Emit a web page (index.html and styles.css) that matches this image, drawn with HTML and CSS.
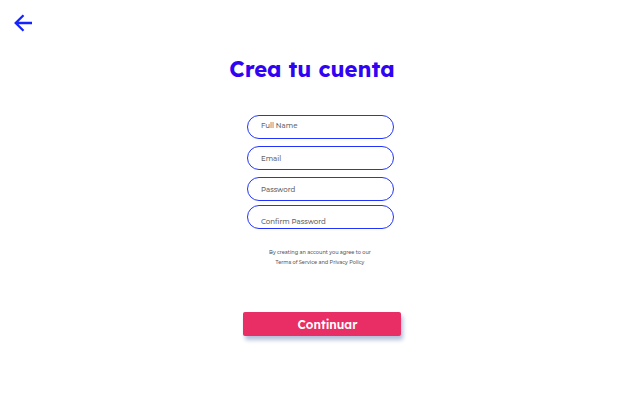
FILE: index.html
```html
<!DOCTYPE html>
<html lang="es">
<head>
<meta charset="utf-8">
<meta name="viewport" content="width=device-width, initial-scale=1">
<title>Crea tu cuenta</title>
<link rel="stylesheet" href="styles.css">
</head>
<body>
<header class="topbar">
  <a class="back" href="#" aria-label="Volver">
    <svg width="20" height="20" viewBox="0 0 20 20" fill="none" stroke="#1524fb" stroke-width="2.3" aria-hidden="true">
      <path d="M19 10H3M10.5 2.2 2.7 10l7.8 7.8"/>
    </svg>
  </a>
</header>
<main class="signup">
  <h1 class="title">Crea tu cuenta</h1>
  <form class="form">
    <div class="fields">
      <input class="field field-name" type="text" placeholder="Full Name" aria-label="Full Name">
      <input class="field" type="email" placeholder="Email" aria-label="Email">
      <input class="field" type="password" placeholder="Password" aria-label="Password">
      <input class="field field-confirm" type="password" placeholder="Confirm Password" aria-label="Confirm Password">
    </div>
    <p class="terms">By creating an account you agree to our<br>Terms of Service and Privacy Policy</p>
    <button class="submit" type="submit">Continuar</button>
  </form>
</main>
</body>
</html>
```
FILE: styles.css
```css
* {
  box-sizing: border-box;
}

body {
  min-height: 100vh;
  margin: 0;
  background: #fff;
  font-family: Montserrat, Inter, "Open Sans", sans-serif;
}

.topbar {
  display: flex;
  padding: 13px 13px 0;
}

.back {
  display: flex;
}

.signup {
  display: flex;
  flex-direction: column;
  align-items: center;
  padding: 20px 0 32px;
}

.title {
  margin: 0;
  padding-right: 16px;
  color: #3003f3;
  font-family: Lexend, Lato, sans-serif;
  font-size: 22px;
  font-weight: 700;
  line-height: 32px;
}

.title,
.submit {
  white-space: nowrap;
}

.form {
  display: flex;
  flex-direction: column;
  align-items: center;
  margin-top: 30px;
}

.fields {
  display: flex;
  flex-direction: column;
  gap: 7px;
  width: 147px;
  margin-left: 1px;
}

.field {
  width: 100%;
  height: 24px;
  padding: 0 12px 0 13px;
  border: 1px solid #2233fb;
  border-radius: 12px;
  background: #fff;
  color: #333;
  font-family: inherit;
  font-size: 7px;
  font-weight: 500;
}

.field::placeholder {
  color: #666;
  opacity: 1;
}

.field-name {
  padding-bottom: 3px;
}

.field-confirm {
  margin-top: -3px;
  padding-top: 9px;
}

.terms {
  margin: 18px 0 0;
  color: #555;
  font-size: 5px;
  font-weight: 500;
  line-height: 10px;
  text-align: center;
}

.submit {
  width: 158px;
  height: 24px;
  margin: 45px 0 0 3px;
  padding: 1px 0 0 12px;
  border: 0;
  border-radius: 2px;
  background: #e82e64;
  box-shadow: 2px 4px 4px #b4bfdb;
  color: #fff;
  font-family: Lexend, Lato, sans-serif;
  font-size: 12px;
  font-weight: 600;
}
```
